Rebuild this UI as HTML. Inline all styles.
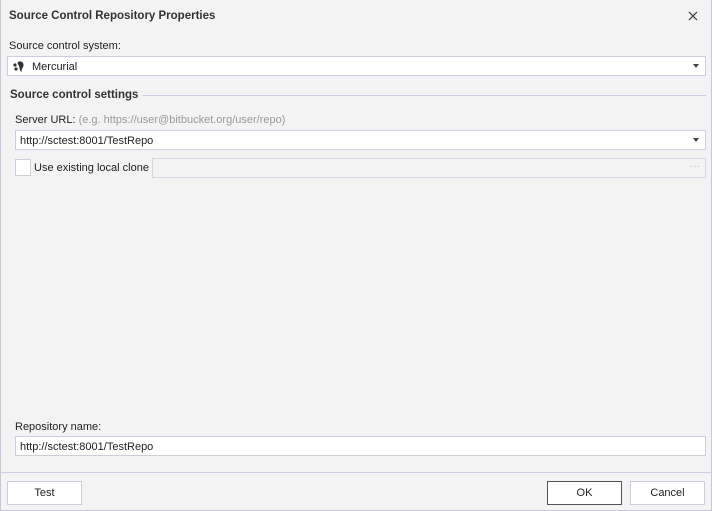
<!DOCTYPE html>
<html><head><style>
*{margin:0;padding:0;box-sizing:border-box}
body{width:712px;height:511px;background:#f3f3f3;font-family:"Liberation Sans",sans-serif;font-size:11px;color:#222;position:relative;overflow:hidden}
.a{position:absolute;white-space:nowrap}
.box{position:absolute;background:#fff;border:1px solid #cdcde0}
.arr{position:absolute;right:6px;top:7px;width:0;height:0;border-left:3.5px solid transparent;border-right:3.5px solid transparent;border-top:4px solid #444}
.btn{position:absolute;background:#fff;border:1px solid #cdcde0;text-align:center;line-height:23px;font-size:11px}
</style></head><body>
<div class="a" style="left:0;top:0;width:712px;height:511px;border:1px solid #c8c8d8;border-top:none"></div>
<div class="a" style="left:9px;top:10px;font-weight:bold;font-size:11.5px;color:#333">Source Control Repository Properties</div>
<svg class="a" style="left:688px;top:11px" width="10" height="10"><path d="M1 1L9 9M9 1L1 9" stroke="#333" stroke-width="1.2"/></svg>
<div class="a" style="left:9px;top:40px">Source control system:</div>
<div class="box" style="left:7px;top:56px;width:699px;height:20px">
<svg class="a" style="left:4px;top:2px" width="14" height="14"><circle cx="3" cy="6" r="1.6" fill="#333"/><circle cx="4" cy="10" r="1.6" fill="#333"/><path d="M6 3C9 1 13 4 11 8C10 10 9 11 10 13C7 12 8 9 7 7C6 5 5 4 6 3Z" fill="#333"/></svg>
<div class="a" style="left:24px;top:4px">Mercurial</div><div class="arr"></div></div>
<div class="a" style="left:10px;top:89px;font-weight:bold;font-size:11.5px;color:#333">Source control settings</div>
<div class="a" style="left:143px;top:95px;width:563px;height:1px;background:#cdcde0"></div>
<div class="a" style="left:15px;top:114px">Server URL: <span style="color:#999">(e.g. https://user@bitbucket.org/user/repo)</span></div>
<div class="box" style="left:15px;top:130px;width:691px;height:20px"><div class="a" style="left:4px;top:4px">http://sctest:8001/TestRepo</div><div class="arr"></div></div>
<div class="box" style="left:15px;top:159px;width:16px;height:17px"></div>
<div class="a" style="left:34px;top:162px">Use existing local clone</div>
<div class="a" style="left:152px;top:158px;width:554px;height:20px;border:1px solid #d8d8e4;background:#f3f3f3"><div class="a" style="right:5px;top:2px;color:#bbb;font-size:10px">···</div></div>
<div class="a" style="left:15px;top:421px">Repository name:</div>
<div class="box" style="left:15px;top:436px;width:691px;height:20px"><div class="a" style="left:4px;top:4px">http://sctest:8001/TestRepo</div></div>
<div class="a" style="left:0;top:472px;width:712px;height:1px;background:#cdcde0"></div>
<div class="btn" style="left:7px;top:481px;width:75px;height:24px">Test</div>
<div class="btn" style="left:547px;top:481px;width:75px;height:24px;border-color:#555">OK</div>
<div class="btn" style="left:630px;top:481px;width:75px;height:24px">Cancel</div>
</body></html>
